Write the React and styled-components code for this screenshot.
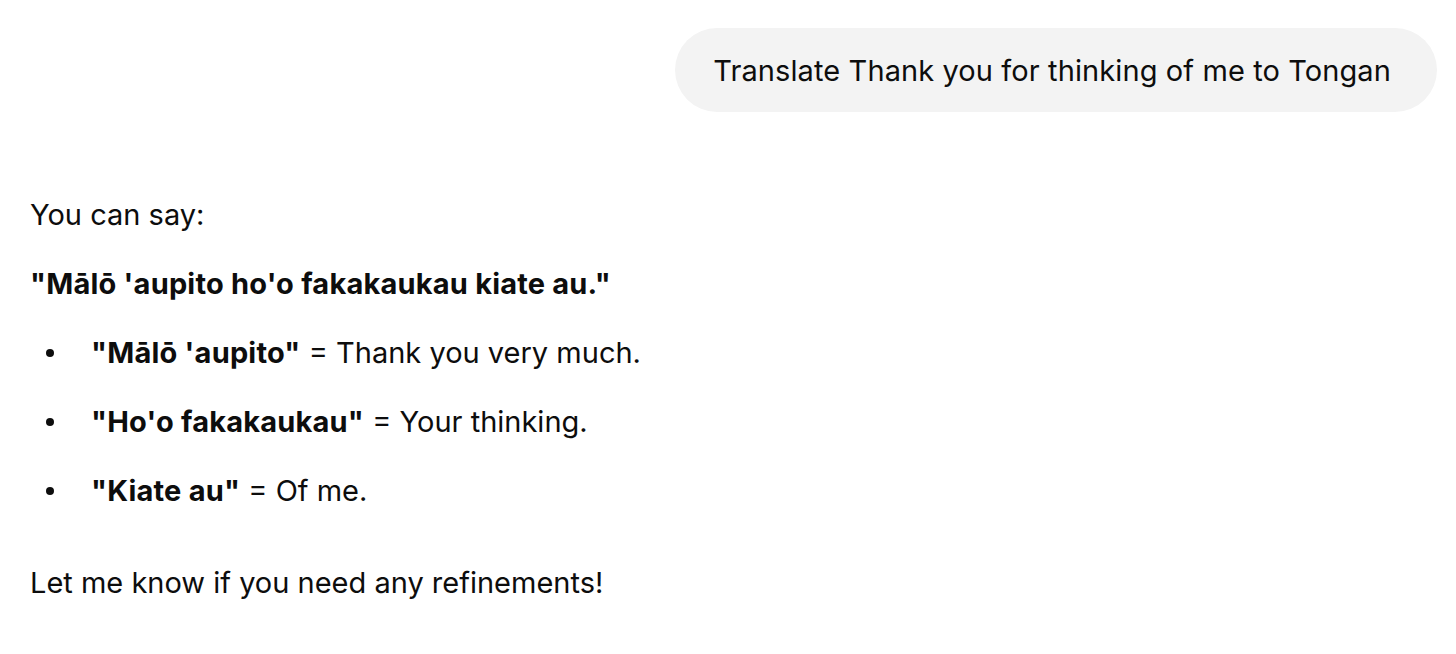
import styled, { createGlobalStyle } from "styled-components";

const Global = createGlobalStyle`
  html, body {
    margin: 0;
    padding: 0;
    background: #fff;
  }
  body {
    font-family: Inter, "Noto Sans", "Liberation Sans", sans-serif;
    color: #0d0d0d;
    -webkit-font-smoothing: antialiased;
  }
`;

const Page = styled.div`
  display: flex;
  flex-direction: column;
  padding: 28px 19px 0 30px;
`;

const UserRow = styled.div`
  display: flex;
  justify-content: flex-end;
`;

const Bubble = styled.div`
  background: #f3f3f3;
  border-radius: 42px;
  height: 84px;
  padding: 0 46px 0 38px;
  display: flex;
  align-items: center;
  font-size: 29px;
  letter-spacing: 0.1px;
`;

const Answer = styled.div`
  display: flex;
  flex-direction: column;
  margin-top: 83px;
  font-size: 29px;
`;

const Para = styled.p`
  margin: 0 0 ${(p) => p.$gap ?? 29}px;
  line-height: 40px;
`;

const List = styled.ul`
  list-style: none;
  margin: 0 0 52px;
  padding: 0;
  display: flex;
  flex-direction: column;
  gap: 29px;
`;

const Item = styled.li`
  display: flex;
  align-items: center;
  line-height: 40px;
  height: 40px;
`;

const Dot = styled.span`
  width: 8px;
  height: 8px;
  border-radius: 50%;
  background: #0d0d0d;
  margin: 0 37px 0 16px;
  flex-shrink: 0;
`;

const Strong = styled.b`
  font-weight: 700;
  letter-spacing: 0.2px;
`;

const items = [
  ["\"Mālō 'aupito\"", "Thank you very much."],
  ["\"Ho'o fakakaukau\"", "Your thinking."],
  ["\"Kiate au\"", "Of me."],
];

export default function App() {
  return (
    <>
      <Global />
      <Page>
        <UserRow>
          <Bubble>Translate Thank you for thinking of me to Tongan</Bubble>
        </UserRow>
        <Answer>
          <Para>You can say:</Para>
          <Para>
            <Strong>"Mālō 'aupito ho'o fakakaukau kiate au."</Strong>
          </Para>
          <List>
            {items.map(([t, m]) => (
              <Item key={t}>
                <Dot />
                <span>
                  <Strong>{t}</Strong> = {m}
                </span>
              </Item>
            ))}
          </List>
          <Para $gap={0}>Let me know if you need any refinements!</Para>
        </Answer>
      </Page>
    </>
  );
}
